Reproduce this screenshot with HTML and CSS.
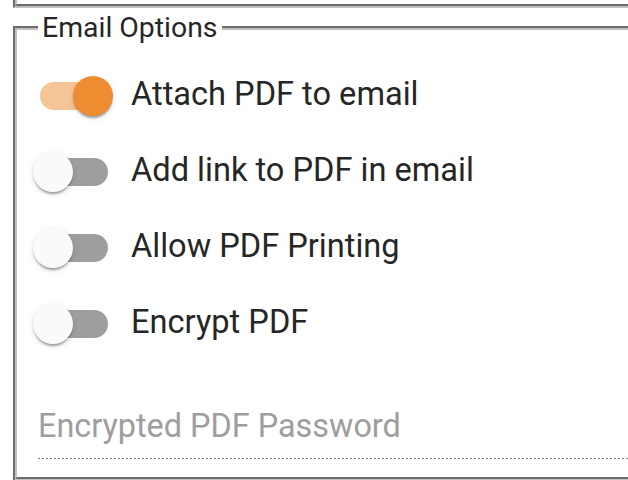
FILE: index.html
```html
<!DOCTYPE html>
<html lang="en">
<head>
<meta charset="utf-8">
<title>Email Options</title>
<link rel="stylesheet" href="styles.css">
</head>
<body>
<div class="page">
  <div class="prev-fieldset"></div>
  <fieldset class="options">
    <legend class="options-legend">Email Options</legend>
    <div class="toggles">
      <label class="toggle-row">
        <span class="toggle is-on"><span class="track"></span><span class="thumb"></span></span>
        <span class="toggle-label">Attach PDF to email</span>
      </label>
      <label class="toggle-row">
        <span class="toggle"><span class="track"></span><span class="thumb"></span></span>
        <span class="toggle-label">Add link to PDF in email</span>
      </label>
      <label class="toggle-row">
        <span class="toggle"><span class="track"></span><span class="thumb"></span></span>
        <span class="toggle-label">Allow PDF Printing</span>
      </label>
      <label class="toggle-row">
        <span class="toggle"><span class="track"></span><span class="thumb"></span></span>
        <span class="toggle-label">Encrypt PDF</span>
      </label>
    </div>
    <div class="field">
      <input class="field-input" type="password" placeholder="Encrypted PDF Password" disabled>
      <div class="field-underline"></div>
    </div>
  </fieldset>
</div>
</body>
</html>
```
FILE: styles.css
```css
html, body {
  margin: 0;
  padding: 0;
  overflow: hidden;
  background: #ffffff;
}

body {
  font-family: Roboto, "Liberation Sans", sans-serif;
  color: rgba(0, 0, 0, 0.87);
}

.page {
  display: flex;
  flex-direction: column;
  padding-left: 13px;
  margin-right: -60px;
}

.prev-fieldset {
  height: 4px;
  border-left: 4px groove #c0c0c0;
  border-bottom: 4px groove #c0c0c0;
}

.options {
  margin: 4px 0 0 0;
  padding: 0 0 18px 21px;
  border: 4px groove #c0c0c0;
  min-width: 0;
}

.options-legend {
  padding: 0 4px;
  font-size: 28.4px;
  line-height: 32px;
  color: #262626;
}

.toggles {
  display: flex;
  flex-direction: column;
  gap: 36px;
  margin-top: 32px;
}

.toggle-row {
  display: flex;
  align-items: center;
  height: 40px;
}

.toggle {
  position: relative;
  width: 68px;
  height: 28px;
  margin-left: 2px;
  flex: none;
}

.track {
  display: block;
  width: 68px;
  height: 28px;
  border-radius: 14px;
  background: #9e9e9e;
}

.thumb {
  position: absolute;
  top: -6px;
  left: -7px;
  width: 40px;
  height: 40px;
  border-radius: 50%;
  background: #fafafa;
  box-shadow: 0 4px 2px -2px rgba(0, 0, 0, 0.2), 0 2px 2px 0 rgba(0, 0, 0, 0.14), 0 2px 6px 0 rgba(0, 0, 0, 0.12);
}

.toggle.is-on .track {
  background: #f6c597;
}

.toggle.is-on .thumb {
  left: 33px;
  background: #ee8c32;
}

.toggle-label {
  margin-left: 23px;
  padding-bottom: 4px;
  font-size: 32.6px;
  line-height: 36px;
  color: #262626;
}

.field {
  display: flex;
  flex-direction: column;
  margin-top: 63px;
}

.field-input {
  border: none;
  outline: none;
  padding: 0;
  margin: 0;
  height: 38px;
  font-family: Roboto, "Liberation Sans", sans-serif;
  font-size: 32.4px;
  line-height: 38px;
  background: transparent;
  color: #212121;
}

.field-input::placeholder {
  color: #9e9e9e;
}

.field-underline {
  margin-top: 13px;
  height: 1px;
  background-image: linear-gradient(to right, #858585 0, #858585 40%, transparent 0);
  background-size: 4px 1px;
  background-repeat: repeat-x;
}
```
